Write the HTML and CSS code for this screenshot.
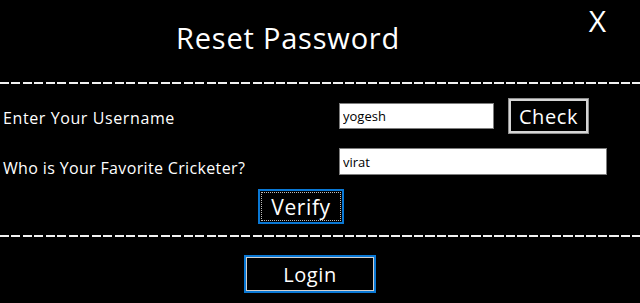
FILE: index.html
```html
<!DOCTYPE html>
<html>
<head>
<meta charset="utf-8">
<link rel="stylesheet" href="styles.css">
</head>
<body>
<div class="dialog">
  <header class="head">
    <h1 class="title">Reset Password</h1>
    <button class="close">X</button>
  </header>
  <div class="dash"></div>
  <section class="form">
    <div class="row row-user">
      <label class="label">Enter Your Username</label>
      <input class="field field-short" type="text" value="yogesh">
      <button class="btn btn-check">Check</button>
    </div>
    <div class="row row-q">
      <label class="label label-q">Who is Your Favorite Cricketer?</label>
      <input class="field field-long" type="text" value="virat">
    </div>
    <div class="row-verify">
      <button class="btn btn-verify"><span class="focus">Verify</span></button>
    </div>
  </section>
  <div class="dash"></div>
  <div class="row-login">
    <button class="btn btn-login">Login</button>
  </div>
</div>
</body>
</html>
```
FILE: styles.css
```css
html, body {
  margin: 0;
  padding: 0;
  background: #000;
  width: 640px;
  height: 303px;
  overflow: hidden;
}
.dialog {
  font-family: "Open Sans", "DejaVu Sans", sans-serif;
  color: #fff;
}
.head {
  display: flex;
  align-items: flex-start;
  height: 82px;
}
.title {
  margin: 19px 0 0 176px;
  font-size: 29px;
  font-weight: 400;
  line-height: 38px;
  letter-spacing: 0.8px;
}
.close {
  margin: 0 34px 0 auto;
  background: none;
  border: none;
  color: #fff;
  font-family: inherit;
  font-size: 30px;
  line-height: 41px;
  padding: 0;
}
.dash {
  height: 2px;
  background: repeating-linear-gradient(to right, #f2f2f2 0 9px, transparent 9px 11.5px);
}
.form {
  box-sizing: border-box;
  padding-top: 15px;
  height: 151px;
}
.row {
  display: flex;
  align-items: center;
}
.label {
  width: 336px;
  padding-left: 3px;
  font-size: 16px;
  line-height: 22px;
  letter-spacing: 0.35px;
}
.row-user {
  height: 34px;
}
.row-user .label {
  padding-top: 4px;
  letter-spacing: 0.6px;
}
.row-q {
  margin-top: 15px;
  height: 27px;
}
.label-q {
  padding-top: 12px;
}
.field {
  box-sizing: border-box;
  height: 26px;
  border: 1px solid #7d7d7d;
  background: #fff;
  color: #000;
  font-family: inherit;
  font-size: 13px;
  padding: 0 3px;
  margin: 0;
  outline: none;
}
.field-short {
  width: 155px;
}
.field-long {
  width: 268px;
  height: 27px;
}
.btn {
  box-sizing: border-box;
  background: #000;
  color: #fff;
  font-family: inherit;
  font-size: 20px;
  letter-spacing: 0.6px;
  padding: 0;
  margin: 0;
  cursor: pointer;
}
.btn-check {
  margin-left: 15px;
  width: 79px;
  height: 34px;
  border: 2px solid #d6d6d6;
  box-shadow: 0 0 0 1px #8f8f8f;
}
.row-verify {
  display: flex;
  padding: 14px 0 0 258px;
  height: 35px;
}
.btn-verify {
  width: 86px;
  height: 35px;
  border: 2px solid #0a78d4;
  padding: 1px;
  font-size: 21px;
}
.focus {
  display: flex;
  align-items: center;
  justify-content: center;
  height: 100%;
  border: 1px dotted #bdbdbd;
  box-sizing: border-box;
}
.row-login {
  display: flex;
  padding: 18px 0 0 244px;
}
.btn-login {
  width: 132px;
  height: 38px;
  border: 2px solid #0a78d4;
  box-shadow: inset 0 0 0 1px #cfcfcf;
}
```
